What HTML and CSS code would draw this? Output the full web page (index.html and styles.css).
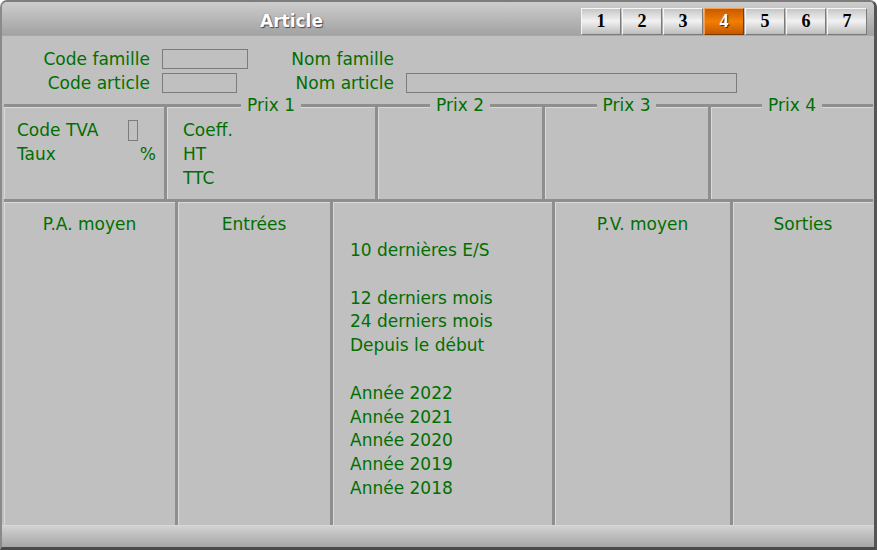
FILE: index.html
```html
<!DOCTYPE html>
<html lang="fr">

<head>
    <meta charset="UTF-8">
    <title>Article</title>
    <link rel="stylesheet" href="styles.css">
</head>

<body>
    <div class="window">
        <div class="titlebar">
            <div class="title">Article</div>
            <div class="tabs">
                <span class="tab">1</span>
                <span class="tab">2</span>
                <span class="tab">3</span>
                <span class="tab active">4</span>
                <span class="tab">5</span>
                <span class="tab">6</span>
                <span class="tab">7</span>
            </div>
        </div>

        <!-- Identification -->
        <div class="form">
            <span class="lbl">Code famille</span>
            <span><span class="field w-fam"></span></span>
            <span class="lbl">Nom famille</span>
            <span></span>

            <span class="lbl">Code article</span>
            <span><span class="field w-art"></span></span>
            <span class="lbl">Nom article</span>
            <span><span class="field w-nom"></span></span>
        </div>

        <!-- Prix -->
        <div class="prices">
            <div class="cell tva">
                <div class="row"><span>Code TVA</span><span class="field w-tva"></span></div>
                <div class="row"><span>Taux</span><span>%</span></div>
            </div>
            <div class="cell">
                <span class="legend">Prix 1</span>
                <div class="lines">
                    <div>Coeff.</div>
                    <div>HT</div>
                    <div>TTC</div>
                </div>
            </div>
            <div class="cell"><span class="legend">Prix 2</span></div>
            <div class="cell"><span class="legend">Prix 3</span></div>
            <div class="cell"><span class="legend">Prix 4</span></div>
        </div>

        <!-- Stock -->
        <div class="stock">
            <div class="cell"><div class="head">P.A. moyen</div></div>
            <div class="cell"><div class="head">Entrées</div></div>
            <div class="cell periods">
                <div>10 dernières E/S</div>
                <div>&nbsp;</div>
                <div>12 derniers mois</div>
                <div>24 derniers mois</div>
                <div>Depuis le début</div>
                <div>&nbsp;</div>
                <div>Année 2022</div>
                <div>Année 2021</div>
                <div>Année 2020</div>
                <div>Année 2019</div>
                <div>Année 2018</div>
            </div>
            <div class="cell"><div class="head">P.V. moyen</div></div>
            <div class="cell"><div class="head">Sorties</div></div>
        </div>

        <div class="statusbar"></div>
    </div>
</body>

</html>
```

FILE: styles.css
```css
body {
    margin: 0;
    background: #ffffff;
    font-family: "DejaVu Sans", Verdana, sans-serif;
    font-size: 17px;
    color: #006f00;
}

.window {
    box-sizing: border-box;
    width: 877px;
    height: 550px;
    background: #c0c0c0;
    border-style: solid;
    border-width: 2px 3px 3px 2px;
    border-color: #7c7c7c #555555 #4a4a4a #8a8a8a;
    border-radius: 7px 7px 0 0;
    display: flex;
    flex-direction: column;
    overflow: hidden;
}

.titlebar {
    height: 34px;
    flex-shrink: 0;
    display: flex;
    background: linear-gradient(#cdcdcd, #a2a2a2);
    border-bottom: 1px solid #a8a8a8;
    box-sizing: border-box;
}

.title {
    flex: 1;
    text-align: center;
    line-height: 34px;
    padding-top: 2px;
    font-weight: bold;
    color: #ffffff;
    text-shadow: 1px 1px 1px #4a4a4a, 0 0 1px #6a6a6a;
}

.tabs {
    display: flex;
    gap: 1px;
    margin: 6px 7px 0 0;
}

.tab {
    box-sizing: border-box;
    width: 40px;
    height: 27px;
    line-height: 25px;
    text-align: center;
    font-family: "Liberation Serif", "Times New Roman", serif;
    font-weight: bold;
    font-size: 18px;
    color: #000000;
    background: linear-gradient(#c6c6c6, #f2f2f2 48%, #bcbcbc);
    border: 1px solid;
    border-color: #f6f6f6 #7a7a7a #7a7a7a #f6f6f6;
}

.tab.active {
    color: #ffffff;
    text-shadow: 1px 1px 0 #5a2a00;
    background: linear-gradient(#c85a00, #f27e00 50%, #c45800);
    border-color: #f0a050 #7a3a00 #7a3a00 #f0a050;
}

.form {
    height: 68px;
    flex-shrink: 0;
    box-sizing: border-box;
    padding-top: 11px;
    display: grid;
    grid-template-columns: 148px 86px 134px 1fr;
    grid-auto-rows: 24px;
    column-gap: 12px;
    align-items: center;
}

.lbl {
    text-align: right;
}

.field {
    display: block;
    box-sizing: border-box;
    height: 20px;
    border: 1px solid #7c7c7c;
}

.w-fam {
    width: 86px;
}

.w-art {
    width: 75px;
}

.w-nom {
    width: 331px;
}

.w-tva {
    width: 10px;
    height: 21px;
    margin-right: 18px;
}

.prices {
    box-sizing: border-box;
    height: 95px;
    flex-shrink: 0;
    margin: 0 1px 0 2px;
    display: grid;
    grid-template-columns: 160px 211px 167px 166px 1fr;
    border-top: 3px solid #8e8e8e;
}

.prices .cell,
.stock .cell {
    position: relative;
    box-sizing: border-box;
    border-left: 3px solid #8e8e8e;
    box-shadow: inset 1px 1px 0 #dadada;
}

.prices .cell:first-child,
.stock .cell:first-child {
    border-left: none;
}

.legend {
    position: absolute;
    top: -12px;
    left: 50%;
    transform: translateX(-50%);
    padding: 0 6px;
    line-height: 20px;
    background: #c0c0c0;
    white-space: nowrap;
}

.tva {
    padding: 11px 8px 0 13px;
}

.tva .row {
    display: flex;
    justify-content: space-between;
    align-items: center;
    height: 24px;
}

.lines {
    padding: 11px 0 0 16px;
    line-height: 24px;
}

.stock {
    flex: 1;
    margin: 0 1px 0 2px;
    display: grid;
    grid-template-columns: 171px 155px 222px 178px 1fr;
    border-top: 3px solid #8e8e8e;
}

.stock .head {
    padding-top: 10px;
    line-height: 24px;
    text-align: center;
}

.periods {
    padding: 37px 0 0 17px;
    line-height: 23.8px;
}

.statusbar {
    height: 22px;
    flex-shrink: 0;
    box-sizing: border-box;
    border-top: 1px solid #d8d8d8;
    background: linear-gradient(#d2d2d2, #a6a6a6);
}
```
